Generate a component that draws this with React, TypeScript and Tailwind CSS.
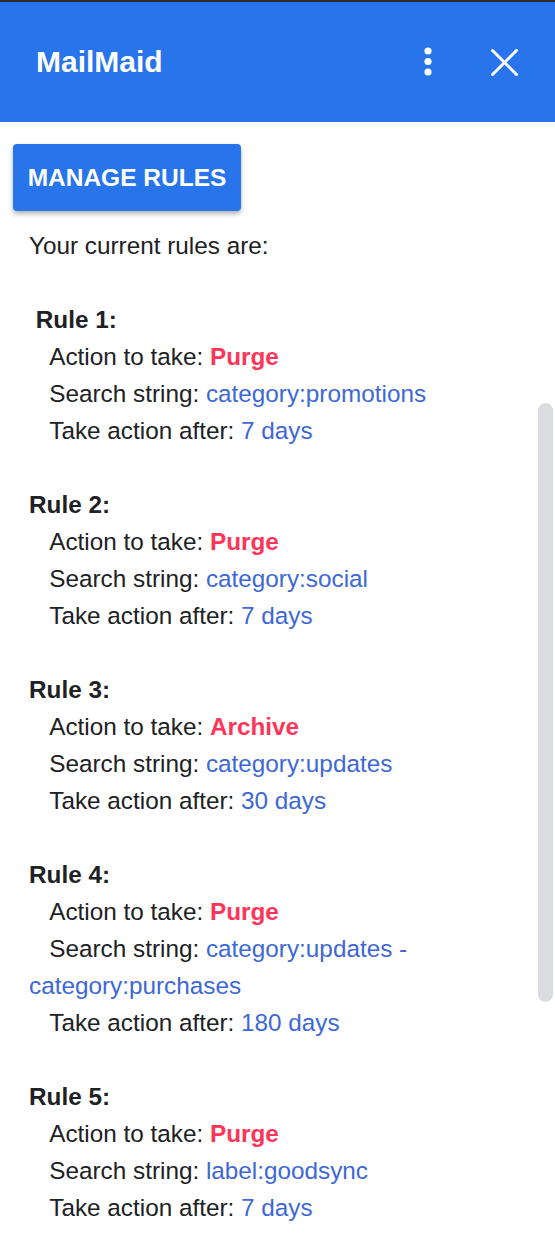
const rules = [
  { id: 1, action: "Purge", search: "category:promotions", after: "7 days", lead: true },
  { id: 2, action: "Purge", search: "category:social", after: "7 days" },
  { id: 3, action: "Archive", search: "category:updates", after: "30 days" },
  { id: 4, action: "Purge", search: "category:updates -category:purchases", after: "180 days" },
  { id: 5, action: "Purge", search: "label:goodsync", after: "7 days" },
];

const indent = "\u00a0\u00a0\u00a0";

const App = () => {
  return (
    <div className="relative min-h-[1260px] w-full bg-white font-['Liberation_Sans',Arial,sans-serif] text-[#202124]">
      <div className="h-[2px] bg-[#2b2d32]" />
      <header className="flex h-[120px] items-center bg-[#2774eb] pl-[36px] text-white">
        <h1 className="text-[30px] font-bold leading-none">MailMaid</h1>
        <div className="ml-auto flex items-center">
          <svg width="10" height="30" viewBox="0 0 10 30" className="mr-[58px]">
            <circle cx="5" cy="4" r="3.6" fill="white" />
            <circle cx="5" cy="14.5" r="3.6" fill="white" />
            <circle cx="5" cy="25" r="3.6" fill="white" />
          </svg>
          <svg width="27" height="27" viewBox="0 0 27 27" className="mr-[37px]">
            <path d="M1.5 1.5 L25.5 25.5 M25.5 1.5 L1.5 25.5" stroke="white" strokeWidth="3" strokeLinecap="square" />
          </svg>
        </div>
      </header>

      <div className="px-[13px] pt-[22px]">
        <button className="flex h-[67px] w-[228px] items-center justify-center rounded-[4px] bg-[#2774eb] pt-[1px] text-[24.5px] font-bold text-white uppercase shadow-[0_3px_5px_rgba(0,0,0,0.3)]">
          Manage Rules
        </button>
      </div>

      <div className="mt-[16px] pl-[29px] pr-[40px] text-[24.3px] leading-[37px]">
        <p>Your current rules are:</p>
        {rules.map((rule) => (
          <div key={rule.id} className="mt-[37px]">
            <p className="font-bold">
              {rule.lead ? "\u00a0" : ""}Rule {rule.id}:
            </p>
            <p>
              {indent}Action to take: <span className="font-bold text-[#fe3458]">{rule.action}</span>
            </p>
            <p>
              {indent}Search string: <span className="text-[#3d68d6]">{rule.search}</span>
            </p>
            <p>
              {indent}Take action after: <span className="text-[#3d68d6]">{rule.after}</span>
            </p>
          </div>
        ))}
      </div>

      <div className="absolute left-[538px] top-[403px] h-[599px] w-[15px] rounded-full bg-[#dadce0]" />
    </div>
  );
};

export default App;
